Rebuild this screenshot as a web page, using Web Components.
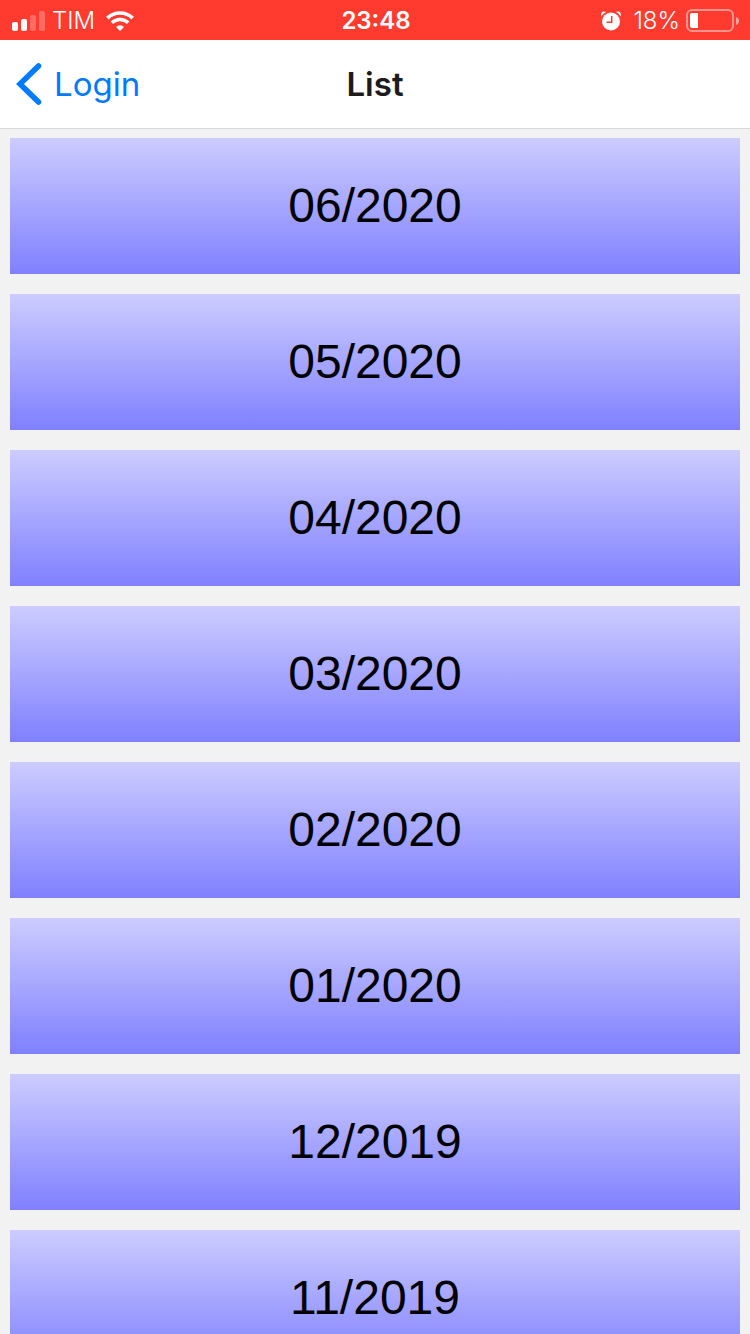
<!DOCTYPE html>
<html lang="en">
<head>
<meta charset="utf-8">
<meta name="viewport" content="width=device-width, initial-scale=1">
<title>List</title>
<style>
  body { margin: 0; font-family: Inter, "Liberation Sans", sans-serif; background: #f2f2f2; }
</style>
</head>
<body>
<month-screen></month-screen>
<script>
const define = (name, html) => {
  const template = document.createElement('template');
  template.innerHTML = html;
  customElements.define(name, class extends HTMLElement {
    constructor() {
      super();
      this.attachShadow({ mode: 'open' }).append(template.content.cloneNode(true));
    }
  });
};

define('signal-icon', `
  <style>:host { display: block; } svg { display: block; }</style>
  <svg width="33" height="20" viewBox="0 0 33 20" fill="#fff" aria-hidden="true">
    <rect x="0" y="11" width="6" height="9" rx="2"/>
    <rect x="9" y="8" width="6" height="12" rx="2"/>
    <rect x="18" y="4" width="6" height="16" rx="2" opacity=".25"/>
    <rect x="27" y="0" width="6" height="20" rx="2" opacity=".25"/>
  </svg>`);

define('wifi-icon', `
  <style>:host { display: block; } svg { display: block; }</style>
  <svg width="28" height="20" viewBox="0 0 28 20" fill="none" stroke="#fff" stroke-width="3.6" aria-hidden="true">
    <path d="M1.3 7.1a18.2 18.2 0 0 1 25.4 0"/>
    <path d="M5.8 11.8a11.7 11.7 0 0 1 16.4 0"/>
    <path d="M14 20l-4-4.1a5.8 5.8 0 0 1 8 0z" fill="#fff" stroke="none"/>
  </svg>`);

define('alarm-icon', `
  <style>:host { display: block; } svg { display: block; }</style>
  <svg width="20" height="20" viewBox="0 0 20 20" fill="none" aria-hidden="true">
    <circle cx="10" cy="10.500" r="9" fill="#fff"/>
    <path d="M.4 5.200A11 11 0 0 1 5 1C3.200 0 1.300.3.500 1.900c-.5 1-.4 2.200-.1 3.300zM19.600 5.200A11 11 0 0 0 15 1C16.800 0 18.700.3 19.500 1.900c.5 1 .4 2.200.1 3.300z" fill="#fff"/>
    <path d="M10.700 5v6.300H5.500" stroke="#ff3b30" stroke-width="1.500"/>
  </svg>`);

define('battery-icon', `
  <style>:host { display: block; } svg { display: block; }</style>
  <svg width="54" height="24" viewBox="0 0 54 24" fill="none" aria-hidden="true">
    <rect x="1" y="1" width="46" height="21" rx="5" stroke="#fff" stroke-opacity=".45" stroke-width="2"/>
    <path d="M4 6q0-2 2-2h6v15H6q-2 0-2-2z" fill="#fff"/>
    <path d="M50 8q3 1 3 4t-3 4z" fill="#fff" fill-opacity=".55"/>
  </svg>`);

define('status-bar', `
  <style>
    :host { display: grid; grid-template-columns: 1fr auto 1fr; align-items: center; height: 40px; box-sizing: border-box;
      padding: 2px 10px 0 12px; background: #ff3b30; color: #fff; font-size: 24px; line-height: 38px; }
    .side { display: flex; align-items: center; }
    .left { gap: 7px; }
    .left svg, .left signal-icon { flex: none; }
    .left wifi-icon { margin-left: 4px; }
    .right { justify-content: flex-end; gap: 6px; }
    .right alarm-icon { margin-right: 6px; }
    .carrier, .percent { font-weight: 300; }
    time { font-weight: 600; }
  </style>
  <div class="side left"><signal-icon></signal-icon><span class="carrier">TIM</span><wifi-icon></wifi-icon></div>
  <time>23:48</time>
  <div class="side right"><alarm-icon></alarm-icon><span class="percent">18%</span><battery-icon></battery-icon></div>`);

define('nav-bar', `
  <style>
    :host { display: grid; grid-template-columns: 1fr auto 1fr; align-items: center; height: 88px;
      padding: 0 16px; background: #fff; border-bottom: 1px solid #d8d8d8; }
    a { display: flex; align-items: center; gap: 12px; justify-self: start; color: #007aff;
      font-size: 33px; line-height: 44px; text-decoration: none; }
    h1 { margin: 0; color: #1c1c1e; font-size: 33px; line-height: 44px; font-weight: 600; }
    svg { display: block; }
  </style>
  <a href="#login">
    <svg width="26" height="42" viewBox="0 0 26 42" fill="none" stroke="#007aff" stroke-width="5.500" stroke-linecap="round" aria-hidden="true"><path d="M22.500 3L4 21l18.500 18"/></svg>
    <slot name="back"></slot>
  </a>
  <h1><slot></slot></h1>`);

define('month-item', `
  <style>
    :host { display: block; }
    button { display: block; width: 100%; height: 136px; border: 0; padding: 0; color: #000; cursor: pointer;
      font: 48px/56px "Liberation Sans", Arial, sans-serif;
      background: linear-gradient(#ccccff, #8080ff); }
  </style>
  <button type="button"><slot></slot></button>`);

define('month-list', `
  <style>
    :host { display: flex; flex-direction: column; gap: 20px; padding: 9px 10px 10px;
      overflow-y: auto; scrollbar-width: none; }
    ::slotted(*) { flex: none; }
  </style>
  <slot></slot>`);

define('month-screen', `
  <style>
    :host { display: flex; flex-direction: column; height: 100vh; }
    status-bar, nav-bar { flex: none; }
    month-list { flex: 1; min-height: 0; }
  </style>
  <status-bar></status-bar>
  <nav-bar><span slot="back">Login</span>List</nav-bar>
  <month-list>
    <month-item>06/2020</month-item>
    <month-item>05/2020</month-item>
    <month-item>04/2020</month-item>
    <month-item>03/2020</month-item>
    <month-item>02/2020</month-item>
    <month-item>01/2020</month-item>
    <month-item>12/2019</month-item>
    <month-item>11/2019</month-item>
  </month-list>`);
</script>
</body>
</html>
